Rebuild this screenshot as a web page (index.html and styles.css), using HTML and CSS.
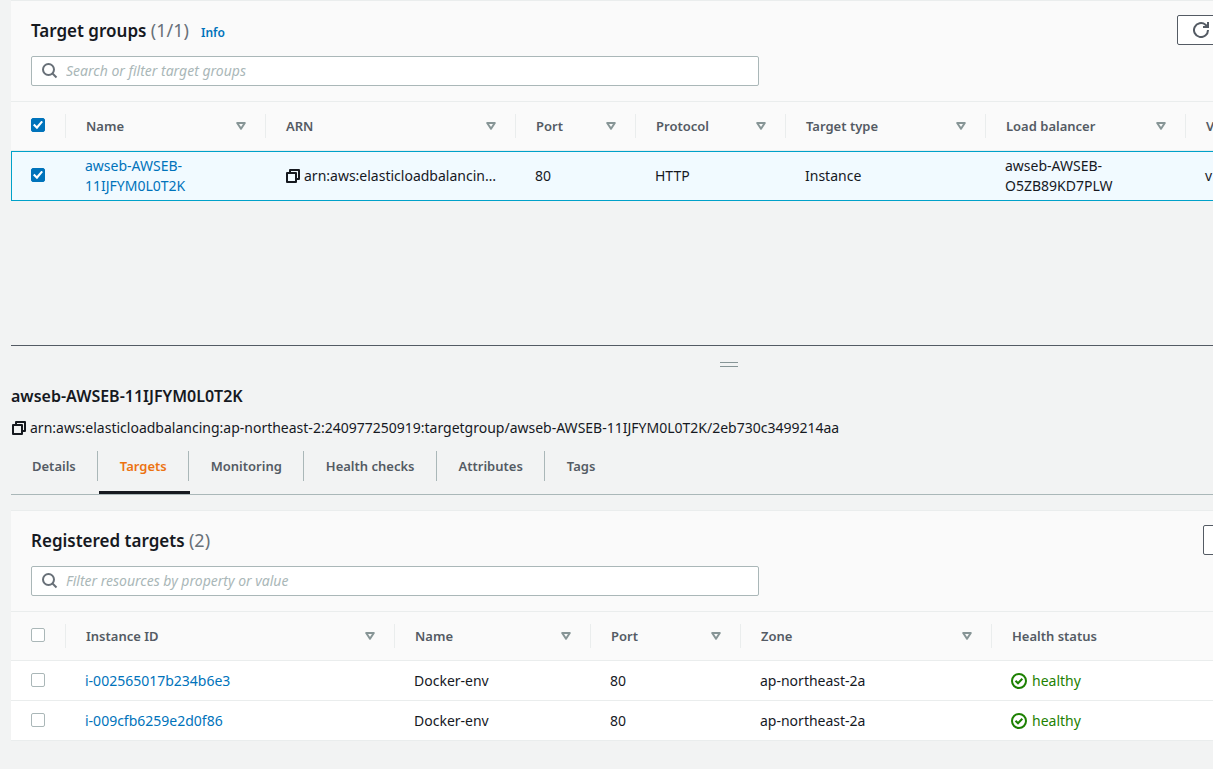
FILE: index.html
```html
<!DOCTYPE html>
<html lang="en">
<head>
  <meta charset="utf-8">
  <title>Target groups</title>
  <link rel="stylesheet" href="styles.css">
</head>
<body>

<!-- shared icons -->
<svg class="sprite" aria-hidden="true">
  <symbol id="i-search" viewBox="0 0 16 16">
    <circle cx="6.5" cy="6.500" r="5.500" fill="none" stroke="currentColor" stroke-width="2"/>
    <path d="M10.500 10.500l4 4" stroke="currentColor" stroke-width="2"/>
  </symbol>
  <symbol id="i-sort" viewBox="0 0 10 8">
    <path d="M1.200 1h7.600L5 6.800z" fill="none" stroke="currentColor" stroke-width="2" stroke-linejoin="round"/>
  </symbol>
  <symbol id="i-copy" viewBox="0 0 14 14">
    <path d="M4 4V1h9v9h-3" fill="none" stroke="currentColor" stroke-width="2" stroke-linejoin="round"/>
    <path d="M1 4h9v9H1z" fill="none" stroke="currentColor" stroke-width="2" stroke-linejoin="round"/>
  </symbol>
  <symbol id="i-refresh" viewBox="0 0 16 16">
    <path d="M15 8a7 7 0 1 1-2.500-5.300L15 5" fill="none" stroke="currentColor" stroke-width="2"/>
    <path d="M15 0v5h-5" fill="none" stroke="currentColor" stroke-width="2"/>
  </symbol>
  <symbol id="i-ok" viewBox="0 0 16 16">
    <circle cx="8" cy="8" r="7" fill="none" stroke="currentColor" stroke-width="2"/>
    <path d="M4.500 7.800l2.500 2.500 4.300-4.500" fill="none" stroke="currentColor" stroke-width="2"/>
  </symbol>
</svg>

<main class="app">

  <section class="panel groups">
    <header class="panel-head">
      <div class="title-row">
        <h1 class="title">Target groups <span class="count">(1/1)</span></h1>
        <a class="info" href="#">Info</a>
        <div class="actions">
          <button class="btn" type="button" aria-label="Refresh"><svg class="icon"><use href="#i-refresh"/></svg></button>
        </div>
      </div>
      <label class="search">
        <svg class="icon search-icon"><use href="#i-search"/></svg>
        <input class="search-input" type="text" placeholder="Search or filter target groups">
      </label>
    </header>

    <table class="table">
      <colgroup>
        <col class="w-check"><col class="w-200"><col class="w-250"><col class="w-120"><col class="w-150"><col class="w-200"><col class="w-200"><col>
      </colgroup>
      <thead>
        <tr>
          <th><div class="th check"><input type="checkbox" aria-label="Select all target groups" checked></div></th>
          <th><div class="th">Name<button class="sort" type="button" aria-label="Sort"><svg><use href="#i-sort"/></svg></button></div></th>
          <th><div class="th">ARN<button class="sort" type="button" aria-label="Sort"><svg><use href="#i-sort"/></svg></button></div></th>
          <th><div class="th">Port<button class="sort" type="button" aria-label="Sort"><svg><use href="#i-sort"/></svg></button></div></th>
          <th><div class="th">Protocol<button class="sort" type="button" aria-label="Sort"><svg><use href="#i-sort"/></svg></button></div></th>
          <th><div class="th">Target type<button class="sort" type="button" aria-label="Sort"><svg><use href="#i-sort"/></svg></button></div></th>
          <th><div class="th">Load balancer<button class="sort" type="button" aria-label="Sort"><svg><use href="#i-sort"/></svg></button></div></th>
          <th><div class="th">V</div></th>
        </tr>
      </thead>
      <tbody>
        <tr class="selected">
          <td><div class="check"><input type="checkbox" aria-label="Select target group" checked></div></td>
          <td><a href="#">awseb-AWSEB-11IJFYM0L0T2K</a></td>
          <td><div class="arn"><button class="copy" type="button" aria-label="Copy ARN"><svg><use href="#i-copy"/></svg></button><span>arn:aws:elasticloadbalancin…</span></div></td>
          <td>80</td>
          <td>HTTP</td>
          <td>Instance</td>
          <td>awseb-AWSEB-O5ZB89KD7PLW</td>
          <td>v</td>
        </tr>
      </tbody>
    </table>
  </section>

  <section class="split">
    <div class="handle"></div>
    <h2 class="split-title">awseb-AWSEB-11IJFYM0L0T2K</h2>
    <div class="arn"><button class="copy" type="button" aria-label="Copy ARN"><svg><use href="#i-copy"/></svg></button><span>arn:aws:elasticloadbalancing:ap-northeast-2:240977250919:targetgroup/awseb-AWSEB-11IJFYM0L0T2K/2eb730c3499214aa</span></div>

    <nav class="tabs" role="tablist">
      <button class="tab" type="button" role="tab"><span>Details</span></button>
      <button class="tab active" type="button" role="tab" aria-selected="true"><span>Targets</span></button>
      <button class="tab" type="button" role="tab"><span>Monitoring</span></button>
      <button class="tab" type="button" role="tab"><span>Health checks</span></button>
      <button class="tab" type="button" role="tab"><span>Attributes</span></button>
      <button class="tab" type="button" role="tab"><span>Tags</span></button>
    </nav>
  </section>

  <section class="panel">
    <header class="panel-head">
      <div class="title-row">
        <h2 class="title">Registered targets <span class="count">(2)</span></h2>
        <div class="actions actions-small">
          <button class="btn btn-wide" type="button" aria-label="Deregister"></button>
        </div>
      </div>
      <label class="search">
        <svg class="icon search-icon"><use href="#i-search"/></svg>
        <input class="search-input" type="text" placeholder="Filter resources by property or value">
      </label>
    </header>

    <table class="table">
      <colgroup>
        <col class="w-check"><col class="w-329"><col class="w-196"><col class="w-150"><col class="w-251"><col>
      </colgroup>
      <thead>
        <tr>
          <th><div class="th check"><input type="checkbox" aria-label="Select all targets"></div></th>
          <th><div class="th">Instance ID<button class="sort" type="button" aria-label="Sort"><svg><use href="#i-sort"/></svg></button></div></th>
          <th><div class="th">Name<button class="sort" type="button" aria-label="Sort"><svg><use href="#i-sort"/></svg></button></div></th>
          <th><div class="th">Port<button class="sort" type="button" aria-label="Sort"><svg><use href="#i-sort"/></svg></button></div></th>
          <th><div class="th">Zone<button class="sort" type="button" aria-label="Sort"><svg><use href="#i-sort"/></svg></button></div></th>
          <th><div class="th">Health status</div></th>
        </tr>
      </thead>
      <tbody>
        <tr>
          <td><div class="check"><input type="checkbox" aria-label="Select i-002565017b234b6e3"></div></td>
          <td><a href="#">i-002565017b234b6e3</a></td>
          <td>Docker-env</td>
          <td>80</td>
          <td>ap-northeast-2a</td>
          <td><div class="healthy"><svg class="icon"><use href="#i-ok"/></svg>healthy</div></td>
        </tr>
        <tr>
          <td><div class="check"><input type="checkbox" aria-label="Select i-009cfb6259e2d0f86"></div></td>
          <td><a href="#">i-009cfb6259e2d0f86</a></td>
          <td>Docker-env</td>
          <td>80</td>
          <td>ap-northeast-2a</td>
          <td><div class="healthy"><svg class="icon"><use href="#i-ok"/></svg>healthy</div></td>
        </tr>
      </tbody>
    </table>
  </section>

</main>
</body>
</html>
```

FILE: styles.css
```css
* {
  box-sizing: border-box;
  }

html {
  overflow-x: hidden;
  }

body {
  margin: 0;
  overflow-x: hidden;
  background-color: #f2f3f3;
  color: #16191f;
  font-family: "Noto Sans", "Open Sans", sans-serif;
  font-size: 14px;
  line-height: 20px;
  }

button, input {
  font: inherit;
  color: inherit;
  }

a {
  color: #0073bb;
  text-decoration: none;
  }

.sprite {
  display: none;
  }

/* the console is wider than small windows, the rest is cut off */
.app {
  min-width: 1447px;
  padding-left: 11px;
  }

.icon {
  width: 16px;
  height: 16px;
  flex: none;
  }

/* panels */
.panel {
  border-top: 1px solid #eaeded;
  background-color: #fafafa;
  }

.panel-head {
  padding: 14px 20px 15px;
  border-bottom: 1px solid #eaeded;
  }

.title-row {
  display: flex;
  align-items: baseline;
  height: 30px;
  margin-bottom: 11px;
  }

.title {
  margin: 0;
  font-size: 17px;
  font-weight: 600;
  line-height: 30px;
  }

.count {
  color: #687078;
  font-size: 18px;
  font-weight: 400;
  }

.info {
  margin-left: 12px;
  font-size: 12px;
  font-weight: 600;
  }

.actions {
  display: flex;
  align-self: flex-start;
  width: 250px;
  margin-left: auto;
  }

.actions-small {
  width: 224px;
  }

.btn {
  display: flex;
  align-items: center;
  justify-content: center;
  width: 48px;
  height: 30px;
  padding: 0;
  border: 1px solid #545b64;
  border-radius: 2px;
  background-color: #fff;
  color: #545b64;
  }

.btn-wide {
  width: 100px;
  }

.search {
  display: flex;
  align-items: center;
  gap: 8px;
  max-width: 728px;
  height: 30px;
  padding: 0 10px;
  border: 1px solid #aab7b8;
  border-radius: 2px;
  background-color: #fff;
  }

.search-icon {
  color: #687078;
  }

.search-input {
  flex: 1;
  padding: 0;
  border: 0;
  outline: none;
  background: none;
  }

.search-input::placeholder {
  color: #aab7b8;
  font-style: italic;
  }

/* tables */
.table {
  width: 100%;
  table-layout: fixed;
  border-collapse: separate;
  border-spacing: 0;
  }

.w-check { width: 55px; }
.w-120 { width: 120px; }
.w-150 { width: 150px; }
.w-196 { width: 196px; }
.w-200 { width: 200px; }
.w-250 { width: 250px; }
.w-251 { width: 251px; }
.w-329 { width: 329px; }

th {
  height: 49px;
  padding: 0;
  border-bottom: 1px solid #eaeded;
  color: #545b64;
  font-size: 13px;
  font-weight: 600;
  text-align: left;
  }

.th {
  display: flex;
  align-items: center;
  justify-content: space-between;
  height: 24px;
  padding: 0 19px 0 20px;
  border-right: 1px solid #eaeded;
  }

th:last-child .th {
  border-right: 0;
  }

.sort {
  display: flex;
  padding: 0;
  border: 0;
  background: none;
  color: #879596;
  }

.sort svg {
  width: 10px;
  height: 8px;
  }

td {
  height: 40px;
  padding: 0 16px 0 19px;
  border-bottom: 1px solid #eaeded;
  background-color: #fff;
  }

td:first-child {
  padding: 0;
  }

.check {
  display: flex;
  padding: 0 20px 2px;
  }

.selected td {
  height: 50px;
  padding-top: 4px;
  padding-bottom: 4px;
  border-top: 1px solid #00a1c9;
  border-bottom: 1px solid #00a1c9;
  background-color: #f1faff;
  }

.selected td:first-child {
  border-left: 1px solid #00a1c9;
  }

.selected .check {
  padding-left: 19px;
  }

input[type="checkbox"] {
  display: grid;
  place-items: center;
  appearance: none;
  width: 14px;
  height: 14px;
  margin: 0;
  border: 1px solid #aab7b8;
  border-radius: 2px;
  background-color: #fff;
  }

input[type="checkbox"]:checked {
  border-color: #0073bb;
  background-color: #0073bb;
  }

input[type="checkbox"]:checked::after {
  content: "";
  width: 10px;
  height: 9px;
  background-color: #fff;
  clip-path: polygon(0 52%, 15% 36%, 38% 62%, 84% 2%, 100% 16%, 40% 96%);
  }

.arn {
  display: flex;
  align-items: center;
  gap: 3px;
  white-space: nowrap;
  }

.copy {
  display: flex;
  flex: none;
  padding: 0 1px;
  border: 0;
  background: none;
  }

.copy svg {
  width: 14px;
  height: 14px;
  }

.healthy {
  display: flex;
  align-items: center;
  gap: 5px;
  color: #1d8102;
  }

.groups {
  background-color: transparent;
  }

.groups .panel-head,
.groups th {
  background-color: #fafafa;
  }

/* lower split panel */
.split {
  margin-top: 144px;
  margin-bottom: 15px;
  border-top: 1px solid #545b64;
  padding-top: 16px;
  }

.handle {
  width: 18px;
  height: 5px;
  margin: 0 auto 19px;
  border-top: 1px solid #879596;
  border-bottom: 1px solid #879596;
  }

.split-title {
  margin: 0 0 12px;
  font-size: 16px;
  font-weight: 600;
  line-height: 20px;
  }

.tabs {
  display: flex;
  height: 44px;
  margin-top: 13px;
  border-bottom: 1px solid #aab7b8;
  }

.tab {
  padding: 0 1px 10px 0;
  border: 0;
  border-bottom: 3px solid transparent;
  background: none;
  color: #545b64;
  font-size: 13px;
  font-weight: 600;
  }

.tab span {
  display: block;
  padding: 5px 21px;
  border-right: 1px solid #aab7b8;
  }

.tab:last-child span {
  border-right: 0;
  }

.tab.active {
  border-bottom-color: #16191f;
  color: #ec7211;
  }
```
